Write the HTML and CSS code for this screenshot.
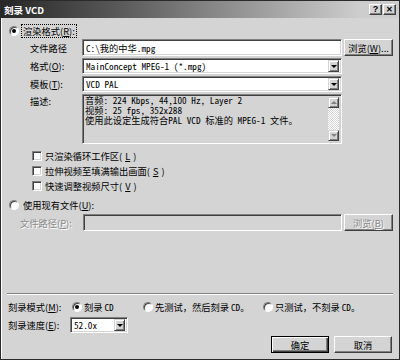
FILE: index.html
```html
<!DOCTYPE html>
<html lang="zh-CN">
<head>
    <meta charset="UTF-8">
    <meta name="viewport" content="width=device-width, initial-scale=1.0">
    <title>刻录 VCD</title>
    <link rel="stylesheet" href="styles.css">
</head>
<body>
    <div class="dialog">
        <div class="titlebar">
            <span class="title">刻录 VCD</span>
            <div class="caption-buttons">
                <span class="caption-btn">?</span>
                <span class="caption-btn close">✕</span>
            </div>
        </div>

        <div class="client">
            <div class="option-row first">
                <span class="radio checked"></span>
                <span class="option-text focused">渲染格式(<u>R</u>):</span>
            </div>

            <div class="form-grid">
                <span class="field-label">文件路径</span>
                <div class="edit mono">C:\我的中华.mpg</div>
                <button class="btn">浏览(<u>W</u>)...</button>

                <span class="field-label">格式(<u>O</u>):</span>
                <div class="combo mono">
                    <span class="combo-text">MainConcept MPEG-1 (*.mpg)</span>
                    <span class="drop"></span>
                </div>
                <span></span>

                <span class="field-label">模板(<u>T</u>):</span>
                <div class="combo mono">
                    <span class="combo-text">VCD PAL</span>
                    <span class="drop"></span>
                </div>
                <span></span>

                <span class="field-label top">描述:</span>
                <div class="memo">
                    <div class="memo-text mono">
                        <div class="memo-line">音频: 224 Kbps, 44,100 Hz, Layer 2</div>
                        <div class="memo-line">视频: 25 fps, 352x288</div>
                        <div class="memo-line">使用此设定生成符合PAL VCD 标准的 MPEG-1 文件。</div>
                    </div>
                    <div class="scrollbar">
                        <span class="sb-btn up"></span>
                        <span class="sb-track"></span>
                        <span class="sb-btn down"></span>
                    </div>
                </div>
                <span></span>
            </div>

            <div class="checks">
                <div class="check-row"><span class="checkbox"></span>只渲染循环工作区(<u>L</u>)</div>
                <div class="check-row"><span class="checkbox"></span>拉伸视频至填满输出画面(<u>S</u>)</div>
                <div class="check-row"><span class="checkbox"></span>快速调整视频尺寸(<u>V</u>)</div>
            </div>

            <div class="option-row second">
                <span class="radio"></span>
                <span class="option-text">使用现有文件(<u>U</u>):</span>
            </div>

            <div class="form-grid disabled-grid">
                <span class="field-label disabled">文件路径(<u>P</u>):</span>
                <div class="edit off"></div>
                <button class="btn disabled">浏览(<u>B</u>)</button>
            </div>

            <div class="spacer"></div>

            <div class="separator"></div>

            <div class="mode-row">
                <span class="mode-label">刻录模式(<u>M</u>):</span>
                <span class="mode-option opt1"><span class="radio checked"></span>刻录 <span class="mono">CD</span></span>
                <span class="mode-option opt2"><span class="radio"></span>先测试，然后刻录 <span class="mono">CD。</span></span>
                <span class="mode-option"><span class="radio"></span>只测试，不刻录 <span class="mono">CD。</span></span>
            </div>

            <div class="speed-row">
                <span class="speed-label">刻录速度(<u>E</u>):</span>
                <div class="combo small mono">
                    <span class="combo-text">52.0x</span>
                    <span class="drop"></span>
                </div>
            </div>

            <div class="button-row">
                <button class="btn push default">确定</button>
                <button class="btn push">取消</button>
            </div>
        </div>
    </div>
</body>
</html>
```

FILE: styles.css
```css
:root {
    --face: #d4d4d4;
    --light: #ffffff;
    --shadow: #808080;
    --dark: #404040;
    --gray-text: #8a8a8a;
}

* {
    box-sizing: border-box;
}

body {
    margin: 0;
    background: var(--face);
    font-family: "Noto Sans CJK SC", "Noto Sans", sans-serif;
    font-size: 9.25px;
    color: #000;
}

u {
    text-decoration-thickness: 1px;
    text-underline-offset: 1px;
}

.mono {
    font-family: "Noto Sans Mono CJK SC", "Liberation Mono", "Noto Sans CJK SC", monospace;
}

.dialog {
    width: 400px;
    height: 360px;
    display: flex;
    flex-direction: column;
    background: var(--face);
    border: 1px solid #2a2a2a;
    box-shadow: inset 1px 1px var(--light);
}

/* 标题栏 */
.titlebar {
    height: 17px;
    display: flex;
    align-items: center;
    justify-content: space-between;
    padding: 0 3px 0 3px;
    background: linear-gradient(to right, #262626, #5a5a5a 30%, #cdcdcd 90%);
}

.title {
    color: #fff;
    font-weight: 700;
    font-size: 9.5px;
}

.caption-buttons {
    display: flex;
    gap: 1px;
}

.caption-btn {
    width: 13px;
    height: 11px;
    display: flex;
    align-items: center;
    justify-content: center;
    font-size: 9px;
    font-weight: 700;
    line-height: 1;
    background: var(--face);
    border: 1px solid;
    border-color: var(--light) var(--dark) var(--dark) var(--light);
    box-shadow: inset -1px -1px var(--shadow);
    font-family: "Liberation Sans", sans-serif;
}

.caption-btn.close {
    font-size: 8px;
}

.client {
    flex: 1;
    display: flex;
    flex-direction: column;
    padding-bottom: 6px;
}

/* 单选框 / 复选框 */
.radio {
    width: 10px;
    height: 10px;
    border-radius: 50%;
    background: #fff;
    border: 1px solid;
    border-color: var(--shadow) var(--light) var(--light) var(--shadow);
    box-shadow: inset 1px 1px var(--dark);
    display: inline-flex;
    align-items: center;
    justify-content: center;
    flex-shrink: 0;
}

.radio.checked::after {
    content: '';
    width: 4px;
    height: 4px;
    border-radius: 50%;
    background: #000;
}

.checkbox {
    width: 10px;
    height: 10px;
    background: #fff;
    border: 1px solid;
    border-color: var(--shadow) var(--light) var(--light) var(--shadow);
    box-shadow: inset 1px 1px var(--dark), inset -1px -1px var(--face);
    flex-shrink: 0;
}

.option-row {
    display: flex;
    align-items: center;
    height: 13px;
    padding-left: 8px;
    gap: 3px;
}

.option-row.first {
    margin-top: 6px;
}

.option-row.second {
    margin-top: 5px;
}

.option-text {
    padding: 0 1px;
    line-height: 12px;
}

.focused {
    outline: 1px dotted #000;
}

/* 表单 */
.form-grid {
    display: grid;
    grid-template-columns: 50px 260px 49px;
    grid-template-rows: 17px 16px 16px 50px;
    column-gap: 2px;
    row-gap: 2px;
    padding-left: 29px;
    margin-top: 2px;
}

.disabled-grid {
    grid-template-columns: 61px 259px 49px;
    grid-template-rows: 17px;
    padding-left: 19px;
    margin-top: 3px;
}

.field-label {
    display: flex;
    align-items: center;
    white-space: nowrap;
}

.field-label.top {
    align-items: flex-start;
    padding-top: 0;
}

.field-label.disabled,
.btn.disabled {
    color: var(--gray-text);
    text-shadow: 1px 1px #fff;
}

.edit,
.combo,
.memo {
    background: #fff;
    border: 1px solid;
    border-color: var(--shadow) var(--light) var(--light) var(--shadow);
    box-shadow: inset 1px 1px var(--dark), inset -1px -1px var(--face);
}

.edit {
    display: flex;
    align-items: center;
    padding-left: 3px;
    white-space: nowrap;
}

.edit.off {
    background: var(--face);
}

.combo {
    display: flex;
    align-items: center;
    justify-content: space-between;
    padding: 2px 2px 2px 3px;
}

.combo-text {
    white-space: nowrap;
}

.drop {
    width: 11px;
    height: 12px;
    display: flex;
    align-items: center;
    justify-content: center;
    background: var(--face);
    border: 1px solid;
    border-color: var(--face) var(--dark) var(--dark) var(--face);
    box-shadow: inset 1px 1px var(--light), inset -1px -1px var(--shadow);
}

.drop::after {
    content: '';
    border-left: 3px solid transparent;
    border-right: 3px solid transparent;
    border-top: 3px solid #000;
}

.memo {
    display: flex;
    background: var(--face);
    padding: 0 2px 2px 1px;
}

.memo-text {
    flex: 1;
    padding-left: 1px;
}

.memo-line {
    height: 10px;
    line-height: 10px;
    white-space: nowrap;
}

.scrollbar {
    width: 11px;
    margin-top: 2px;
    display: flex;
    flex-direction: column;
}

.sb-track {
    flex: 1;
    background-image: repeating-conic-gradient(#fff 0 25%, var(--face) 0 50%);
    background-size: 2px 2px;
}

.sb-btn {
    height: 11px;
    display: flex;
    align-items: center;
    justify-content: center;
    background: var(--face);
    border: 1px solid;
    border-color: var(--face) var(--dark) var(--dark) var(--face);
    box-shadow: inset 1px 1px var(--light), inset -1px -1px var(--shadow);
}

.sb-btn.up::after {
    content: '';
    border-left: 3px solid transparent;
    border-right: 3px solid transparent;
    border-bottom: 3px solid var(--shadow);
}

.sb-btn.down::after {
    content: '';
    border-left: 3px solid transparent;
    border-right: 3px solid transparent;
    border-top: 3px solid var(--shadow);
}

.btn {
    font: inherit;
    color: #000;
    background: var(--face);
    border: 1px solid;
    border-color: var(--light) var(--dark) var(--dark) var(--light);
    box-shadow: inset -1px -1px var(--shadow);
    padding: 0;
    white-space: nowrap;
}

.checks {
    margin-top: 4px;
    padding-left: 31px;
}

.check-row {
    display: flex;
    align-items: center;
    gap: 3px;
    height: 15px;
}

.spacer {
    flex: 1;
}

.separator {
    margin: 0 6px 0 6px;
    height: 2px;
    border-top: 1px solid var(--shadow);
    border-bottom: 1px solid var(--light);
}

/* 底部 */
.mode-row {
    display: flex;
    align-items: center;
    height: 13px;
    margin-top: 5px;
    padding-left: 7px;
}

.mode-label {
    width: 64px;
}

.mode-option {
    display: flex;
    align-items: center;
    gap: 2px;
}

.opt1 {
    width: 71px;
}

.opt2 {
    width: 120px;
}

.speed-row {
    display: flex;
    align-items: center;
    height: 16px;
    margin-top: 4px;
    padding-left: 7px;
}

.speed-label {
    width: 62px;
}

.combo.small {
    width: 58px;
    height: 16px;
}

.button-row {
    display: flex;
    justify-content: flex-end;
    gap: 5px;
    margin-top: 3px;
    padding-right: 7px;
}

.btn.push {
    width: 58px;
    height: 17px;
}

.btn.default {
    border-color: #000;
    box-shadow: inset 1px 1px var(--light), inset -1px -1px var(--dark), inset -2px -2px var(--shadow);
}
```
